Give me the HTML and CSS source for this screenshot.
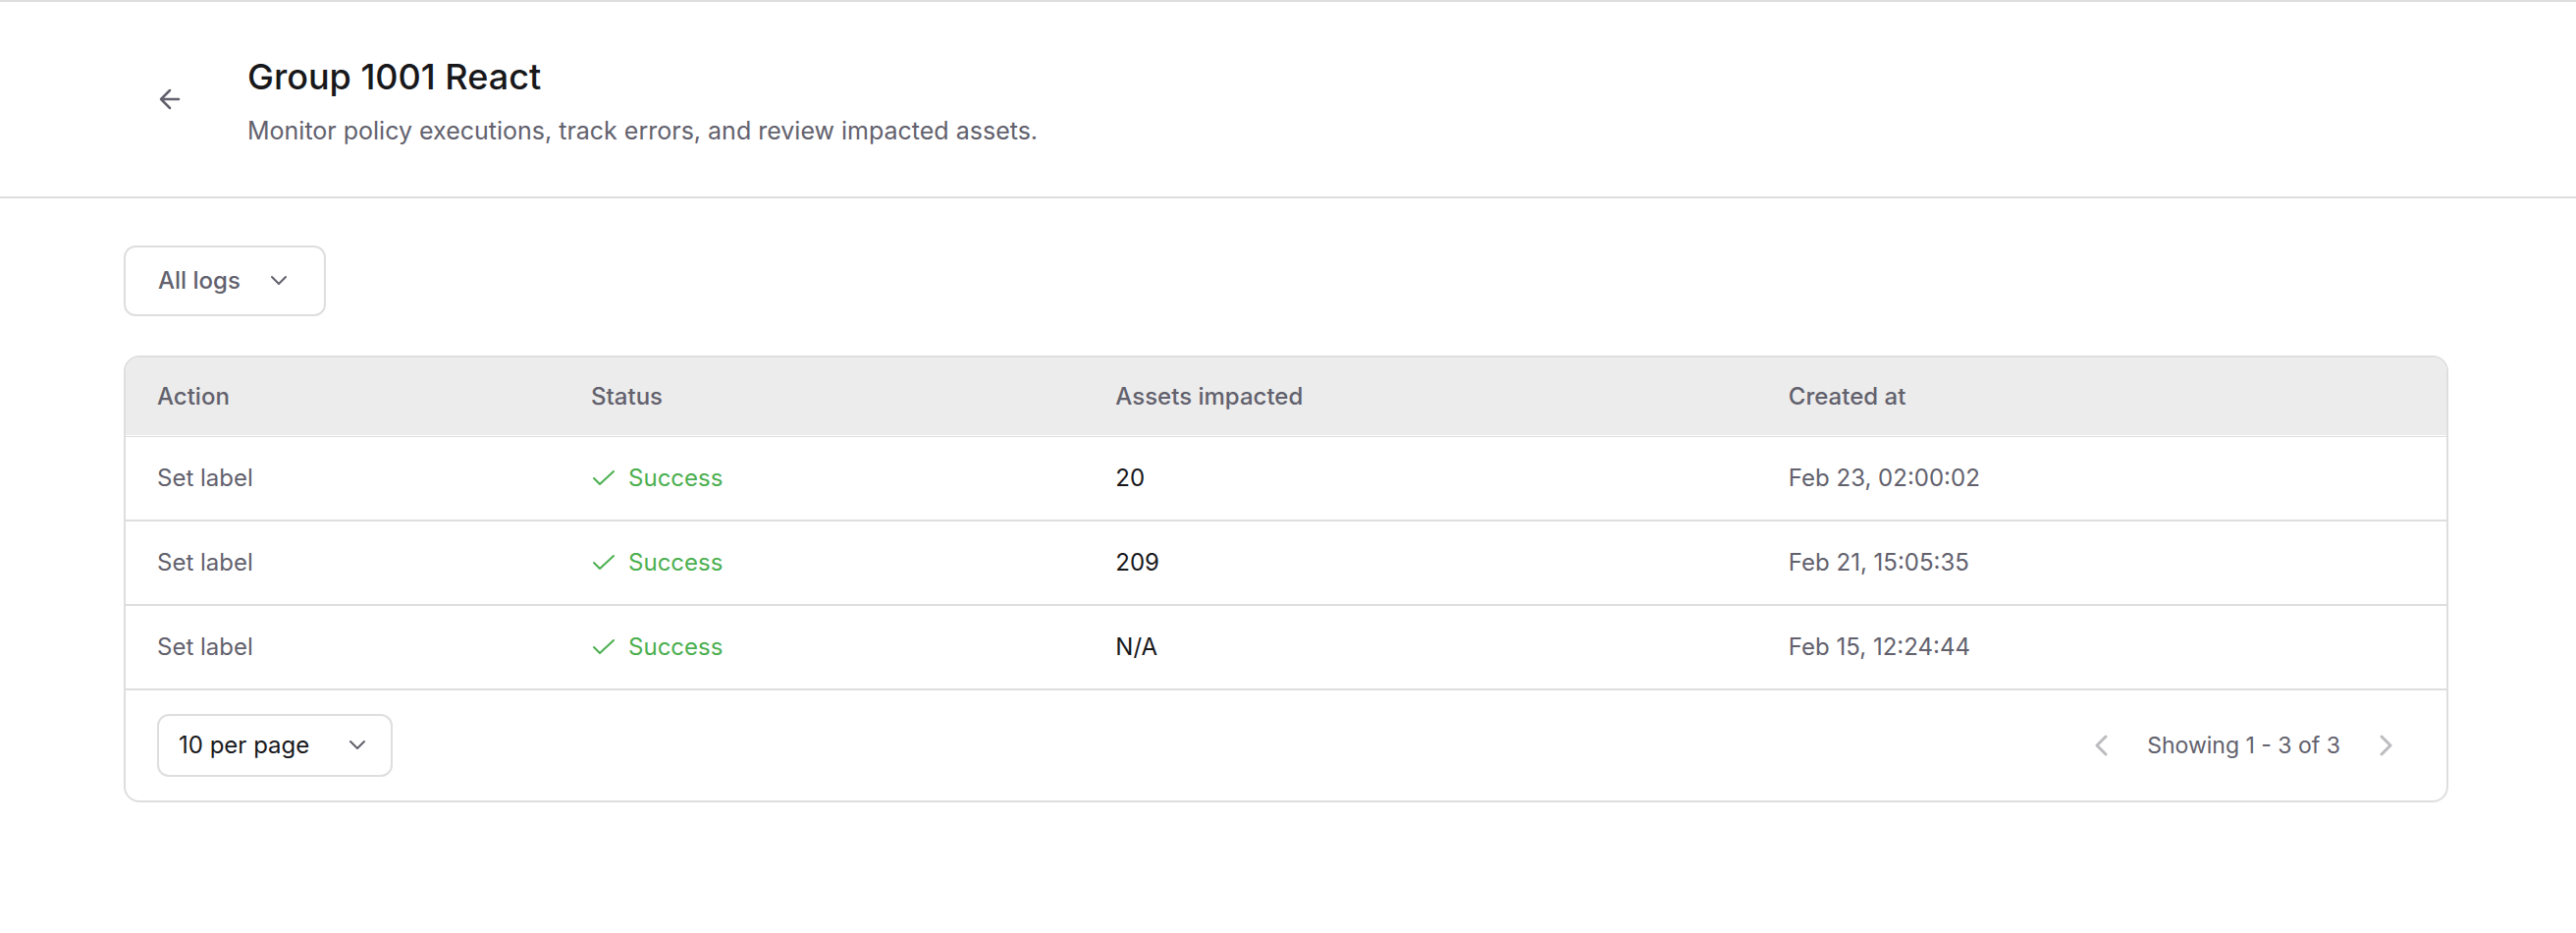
FILE: index.html
```html
<!DOCTYPE html>
<html lang="en">
<head>
    <meta charset="UTF-8">
    <meta name="viewport" content="width=device-width, initial-scale=1.0">
    <title>Group 1001 React</title>
    <link rel="stylesheet" href="styles.css">
</head>
<body>
    <header class="page-header">
        <button type="button" class="back-btn" aria-label="Back">
            <svg width="24" height="24" viewBox="0 0 24 24" stroke-width="2.5"><path d="M21 12H3M12 3L3 12L12 21"/></svg>
        </button>
        <div>
            <h1>Group 1001 React</h1>
            <p>Monitor policy executions, track errors, and review impacted assets.</p>
        </div>
    </header>
    <main class="content">
        <div class="select select-filter">
            <select id="logs" aria-label="Logs">
                <option>All logs</option>
                <option>Success</option>
                <option>Failed</option>
            </select>
            <svg class="chevron" width="20" height="20" viewBox="0 0 20 20" stroke-width="2"><path d="M3 6L10 13L17 6"/></svg>
        </div>
        <div class="card">
            <table class="logs-table">
                <colgroup>
                    <col class="col-action">
                    <col class="col-status">
                    <col class="col-assets">
                    <col>
                </colgroup>
                <thead>
                    <tr><th>Action</th><th>Status</th><th>Assets impacted</th><th>Created at</th></tr>
                </thead>
                <tbody>
                    <tr>
                        <td>Set label</td>
                        <td><span class="status"><svg width="26" height="20" viewBox="0 0 26 20" stroke-width="2"><path d="M3 10L9 16L23 3"/></svg>Success</span></td>
                        <td class="assets">20</td>
                        <td>Feb 23, 02:00:02</td>
                    </tr>
                    <tr>
                        <td>Set label</td>
                        <td><span class="status"><svg width="26" height="20" viewBox="0 0 26 20" stroke-width="2"><path d="M3 10L9 16L23 3"/></svg>Success</span></td>
                        <td class="assets">209</td>
                        <td>Feb 21, 15:05:35</td>
                    </tr>
                    <tr>
                        <td>Set label</td>
                        <td><span class="status"><svg width="26" height="20" viewBox="0 0 26 20" stroke-width="2"><path d="M3 10L9 16L23 3"/></svg>Success</span></td>
                        <td class="assets">N/A</td>
                        <td>Feb 15, 12:24:44</td>
                    </tr>
                </tbody>
            </table>
            <div class="table-footer">
                <div class="select select-page">
                    <select id="perPage" aria-label="Rows per page">
                        <option>10 per page</option>
                        <option>25 per page</option>
                        <option>50 per page</option>
                    </select>
                    <svg class="chevron" width="20" height="20" viewBox="0 0 20 20" stroke-width="2"><path d="M3 6L10 13L17 6"/></svg>
                </div>
                <div class="pager">
                    <button type="button" aria-label="Previous page" disabled>
                        <svg width="24" height="24" viewBox="0 0 24 24" stroke-width="3"><path d="M16 3L7 12L16 21"/></svg>
                    </button>
                    <span>Showing 1 - 3 of 3</span>
                    <button type="button" aria-label="Next page" disabled>
                        <svg width="24" height="24" viewBox="0 0 24 24" stroke-width="3"><path d="M8 3L17 12L8 21"/></svg>
                    </button>
                </div>
            </div>
        </div>
    </main>
</body>
</html>
```
FILE: styles.css
```css
* { box-sizing: border-box; }
body { margin: 0; font-family: Inter, "Liberation Sans", sans-serif; font-size: 24px; line-height: 32px; color: #62616d; background: #fff; }
svg { display: block; fill: none; stroke: currentColor; stroke-linecap: round; stroke-linejoin: round; }
button { display: flex; padding: 0; border: none; background: none; color: inherit; cursor: pointer; }

.page-header { display: flex; align-items: center; gap: 67px; padding: 50px 130px 50px 161px; border-top: 2px solid #dedede; border-bottom: 2px solid #dedede; }
.page-header h1 { margin: 0 0 12px; font-size: 36px; line-height: 52px; font-weight: 500; color: #18181b; }
.page-header p { margin: 0; font-size: 25px; line-height: 34px; }

.content { padding: 48px 130px 48px 126px; }

.select { position: relative; }
.select select { width: 100%; height: 100%; appearance: none; border: 2px solid #dedede; border-radius: 12px; background: #fff; color: inherit; font: inherit; cursor: pointer; }
.select .chevron { position: absolute; top: 50%; margin-top: -10px; pointer-events: none; }
.select-filter { width: 206px; height: 72px; margin-bottom: 40px; font-weight: 500; }
.select-filter select { padding: 0 33px; }
.select-filter .chevron { right: 38px; }
.select-page { width: 240px; height: 64px; color: #18181b; }
.select-page select { padding: 0 20px; }
.select-page .chevron { right: 26px; color: #62616d; }

.card { border: 2px solid #dedede; border-radius: 16px; overflow: hidden; }
.logs-table { width: 100%; table-layout: fixed; border-spacing: 0; text-align: left; }
.col-action { width: 18.7%; }
.col-status { width: 22.6%; }
.col-assets { width: 29%; }
.logs-table th { height: 81px; padding: 0 32px; font-weight: 500; background: #ececec; border-bottom: 1px solid #dedede; box-shadow: inset 0 -1px #fff; }
.logs-table td { height: 86px; padding: 0 32px; border-bottom: 2px solid #dedede; }
.logs-table .assets { color: #18181b; }
.status { display: flex; align-items: center; gap: 12px; color: #4caf50; }

.table-footer { display: flex; align-items: center; justify-content: space-between; padding: 24px 50px 24px 32px; }
.pager { display: flex; align-items: center; gap: 34px; font-size: 23px; }
.pager button:disabled { color: #bdbdc1; cursor: default; }
```
